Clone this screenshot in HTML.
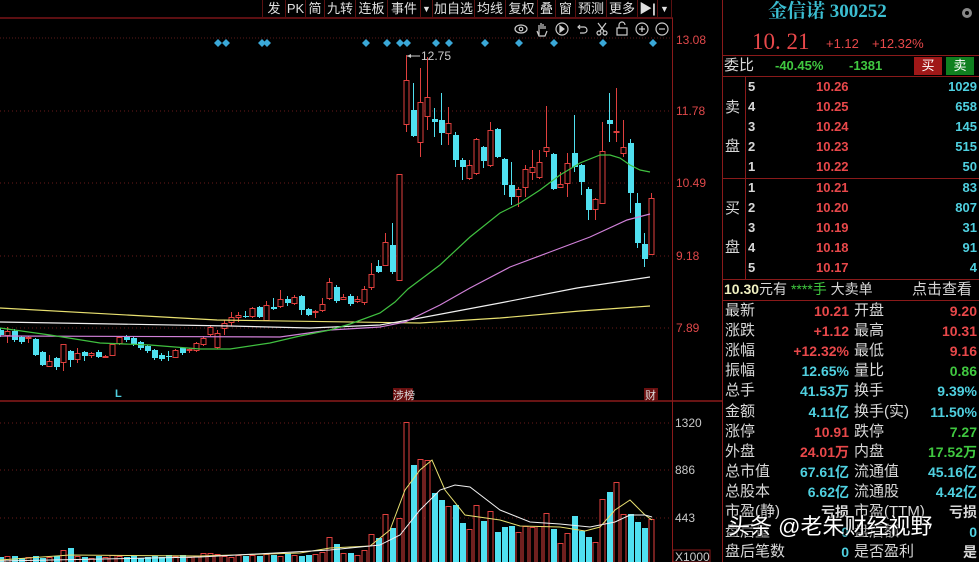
<!DOCTYPE html>
<html><head><meta charset="utf-8">
<style>
*{margin:0;padding:0;box-sizing:border-box}
body{width:979px;height:562px;background:#000;overflow:hidden;position:relative;font-family:"Liberation Sans","Noto Sans CJK SC",sans-serif;color:#d0d0d0}
.a{position:absolute;white-space:nowrap;line-height:1}
.tb{position:absolute;top:0;height:18px;font-size:13px;color:#e0e0e0;line-height:18px;text-align:center;border-right:1px solid #5a1010}
.r{color:#e8484a}.c{color:#4fd0e0}.g{color:#40c840}.w{color:#d8d8d8}
.ra{text-align:right}
</style></head><body>
<svg id="sv" width="979" height="562" style="position:absolute;left:0;top:0">
<line x1="0" y1="18" x2="673" y2="18" stroke="#7a1418" stroke-width="1.5"/>
<line x1="0" y1="38" x2="672" y2="38" stroke="#5a1a1a" stroke-dasharray="1,2"/>
<line x1="0" y1="111" x2="672" y2="111" stroke="#6a1a1a" stroke-dasharray="1,3"/>
<line x1="0" y1="183" x2="672" y2="183" stroke="#6a1a1a" stroke-dasharray="1,3"/>
<line x1="0" y1="256" x2="672" y2="256" stroke="#6a1a1a" stroke-dasharray="1,3"/>
<line x1="0" y1="328" x2="672" y2="328" stroke="#6a1a1a" stroke-dasharray="1,3"/>
<line x1="0" y1="423" x2="672" y2="423" stroke="#6a1a1a" stroke-dasharray="1,3"/>
<line x1="0" y1="470" x2="672" y2="470" stroke="#6a1a1a" stroke-dasharray="1,3"/>
<line x1="0" y1="518" x2="672" y2="518" stroke="#6a1a1a" stroke-dasharray="1,3"/>
<line x1="0" y1="401" x2="722" y2="401" stroke="#8a1a1a" stroke-width="1.5"/>
<line x1="672.5" y1="18" x2="672.5" y2="562" stroke="#8a1a1a"/>
<line x1="722.5" y1="0" x2="722.5" y2="562" stroke="#8a1a1a"/>
<g id="g"></g>
<polyline fill="none" stroke="#e8e070" stroke-width="1.2" points="0,308 217,320 420,323 500,318 580,311 650,306"/>
<polyline fill="none" stroke="#f0f0f0" stroke-width="1.2" points="0,322 230,326 310,328 380,325 420,318 500,303 577,288 650,277"/>
<polyline fill="none" stroke="#d080d8" stroke-width="1.2" points="0,336 280,337 330,330 380,327 405,322 440,305 470,288 510,267 550,252 590,237 627,220 650,214"/>
<polyline fill="none" stroke="#40c040" stroke-width="1.2" points="0,328 50,335 100,343 150,345 200,349 230,349 270,343 300,336 330,330 350,324 380,313 395,302 408,289 440,265 470,237 500,213 520,203 540,190 560,175 580,163 600,155 610,155 620,158 630,165 640,170 650,172"/>
<polyline fill="none" stroke="#e8e070" stroke-width="1" points="0,560 70,555 200,556 300,553 330,548 370,546 390,530 405,490 420,470 432,460 445,490 465,515 500,520 520,526 560,527 585,531 600,527 615,510 630,500 645,515 652,520"/>
<polyline fill="none" stroke="#f0f0f0" stroke-width="1" points="0,561 200,557 330,550 380,545 400,535 420,510 440,490 455,485 470,487 500,510 530,522 560,524 590,527 615,522 630,515 645,515 652,517"/>
<line x1="407" y1="56" x2="420" y2="56" stroke="#ccc"/><path d="M407 56l4-2v4z" fill="#ccc"/>
<text x="421" y="60" font-size="12" fill="#ccc" font-family="Liberation Sans">12.75</text>
<g stroke="#ccc" fill="none" stroke-width="1.2">
<ellipse cx="521" cy="29" rx="6" ry="4"/><circle cx="521" cy="29" r="1.8"/>
<path d="M539 35v-6v-4m2 4v-6m2 6v-5m2 5v-3m-8 5l2 5h6l2-5"/>
<circle cx="562" cy="29" r="6"/><path d="M560 26l4 3l-4 3z" fill="#ccc"/>
<path d="M578 27h6a3 3 0 010 6h-4M580 25l-2 2 2 2"/>
<circle cx="599" cy="33" r="2"/><circle cx="605" cy="33" r="2"/><path d="M600 31l6-8M604 31l-6-8"/>
<rect x="617" y="28" width="10" height="7"/><path d="M619 28v-3a3 3 0 016 0"/>
<circle cx="642" cy="29" r="6"/><path d="M639 29h6M642 26v6"/>
<circle cx="662" cy="29" r="6"/><path d="M659 29h6"/>
</g>
<g font-family="Liberation Sans" font-size="12" fill="#e0484a">
<text x="676" y="44">13.08</text><text x="676" y="115">11.78</text><text x="676" y="187">10.49</text><text x="676" y="260">9.18</text><text x="676" y="332">7.89</text>
</g>
<g font-family="Liberation Sans" font-size="12" fill="#c8c8c8">
<text x="675" y="427">1320</text><text x="675" y="474">886</text><text x="675" y="522">443</text>
</g>
<rect x="673" y="550" width="37" height="12" fill="none" stroke="#8a1a1a"/>
<text x="675" y="561" font-size="12" fill="#c8c8c8" font-family="Liberation Sans">X1000</text>
<text x="115" y="397" font-size="11" fill="#4fd0e0" font-weight="bold" font-family="Liberation Sans">L</text>
<rect x="393" y="388" width="20" height="12" fill="#6a1010"/>
<text x="393" y="399" font-size="11" fill="#ddd" font-family="Liberation Sans,Noto Sans CJK SC">涉榜</text>
<rect x="644" y="388" width="14" height="12" fill="#6a1010"/>
<text x="645" y="399" font-size="11" fill="#ddd" font-family="Noto Sans CJK SC">财</text>
<g stroke="#8a1a1a">
<line x1="722" y1="55.5" x2="979" y2="55.5"/><line x1="722" y1="76.5" x2="979" y2="76.5"/>
<line x1="722" y1="178.5" x2="979" y2="178.5"/><line x1="722" y1="279.5" x2="979" y2="279.5"/>
<line x1="722" y1="300.5" x2="979" y2="300.5"/><line x1="745.5" y1="76" x2="745.5" y2="279"/>
</g>
<g fill="#888"><circle cx="967" cy="13" r="5"/><circle cx="967" cy="13" r="2" fill="#000"/></g>
</svg>

<div class="tb" style="left:262px;width:24px;border-left:1px solid #5a1010">发</div>
<div class="tb" style="left:286px;width:20px">PK</div>
<div class="tb" style="left:306px;width:19px">简</div>
<div class="tb" style="left:325px;width:31px">九转</div>
<div class="tb" style="left:356px;width:32px">连板</div>
<div class="tb" style="left:388px;width:33px">事件</div>
<div class="tb" style="left:421px;width:12px;font-size:9px">▼</div>
<div class="tb" style="left:433px;width:42px">加自选</div>
<div class="tb" style="left:475px;width:31px">均线</div>
<div class="tb" style="left:506px;width:32px">复权</div>
<div class="tb" style="left:538px;width:18px">叠</div>
<div class="tb" style="left:556px;width:20px">窗</div>
<div class="tb" style="left:576px;width:31px">预测</div>
<div class="tb" style="left:607px;width:31px">更多</div>
<div class="tb" style="left:638px;width:20px;font-weight:bold">▶|</div>
<div class="tb" style="left:658px;width:14px;font-size:9px">▼</div>

<div class="a" style="left:768px;top:2px;font-size:19px;font-weight:bold;color:#3bbdd0;font-family:'Liberation Serif','Noto Serif CJK SC',serif">金信诺 300252</div>
<div class="a r" style="left:752px;top:30px;font-size:23px;font-family:'Liberation Serif',serif">10. 21</div>
<div class="a r" style="left:826px;top:37px;font-size:13px">+1.12</div>
<div class="a r" style="left:872px;top:37px;font-size:13px">+12.32%</div>
<div class="a w" style="left:724px;top:58px;font-size:15px">委比</div>
<div class="a g" style="left:775px;top:59px;font-size:13px;font-weight:bold">-40.45%</div>
<div class="a g" style="left:849px;top:59px;font-size:13px;font-weight:bold">-1381</div>
<div class="a" style="left:914px;top:57px;width:28px;height:18px;background:#a01818;color:#fff;font-size:13px;text-align:center;line-height:18px">买</div>
<div class="a" style="left:946px;top:57px;width:28px;height:18px;background:#108020;color:#fff;font-size:13px;text-align:center;line-height:18px">卖</div>
<div id="ob"></div>
<div class="a w" style="left:725px;top:100px;font-size:15px">卖</div>
<div class="a w" style="left:725px;top:139px;font-size:15px">盘</div>
<div class="a w" style="left:725px;top:201px;font-size:15px">买</div>
<div class="a w" style="left:725px;top:240px;font-size:15px">盘</div>
<div class="a" style="left:724px;top:282px;font-size:14px"><b style="color:#f0f0c0">10.30</b><span class="w">元有</span> <span class="g">****手</span> <span class="w">大卖单</span></div>
<div class="a w" style="left:912px;top:282px;font-size:15px">点击查看</div>
<div id="st"></div>
<div class="a" style="left:728px;top:516px;font-size:22px;color:#fff;text-shadow:1px 1px 2px #000,0 0 3px #000">头条 @老朱财经视野</div>

<script>
var d=[["c",330,335,328,337],["r",331,335,327,343],["c",331,340,329,342],["c",337,342,336,344],["r",337,338,336,343],["c",339,355,338,356],["c",352,365,351,366],["r",361,366,355,367],["c",358,367,357,370],["r",344,362,344,371],["c",351,360,350,367],["r",353,359,348,363],["c",352,356,351,361],["r",353,355,352,358],["c",352,357,350,358],["r",356,357,355,357],["r",344,355,343,356],["r",337,343,336,345],["c",336,340,335,342],["c",338,344,337,346],["c",342,348,341,350],["c",346,351,345,353],["c",350,358,349,360],["c",355,359,353,361],["c",356,357,351,361],["r",350,357,349,358],["c",348,353,347,355],["r",349,350,348,353],["r",343,350,342,352],["r",338,344,336,346],["r",327,334,325,336],["r",333,347,330,349],["r",323,328,320,335],["r",317,322,312,326],["r",315,317,312,322],["c",316,317,311,318],["r",308,316,307,318],["c",307,317,306,318],["r",305,320,301,321],["c",307,309,298,310],["r",299,306,290,308],["c",299,303,296,306],["r",297,303,295,305],["c",296,310,295,315],["c",309,315,308,316],["r",311,312,310,318],["r",304,310,298,312],["r",282,298,278,300],["c",287,301,285,303],["r",297,299,294,300],["c",296,304,294,306],["r",299,301,296,303],["r",289,302,286,305],["r",274,287,263,290],["c",266,272,260,273],["r",242,265,233,266],["c",245,272,223,274],["r",174,280,174,281],["r",80,124,55,132],["c",110,136,83,137],["r",102,142,68,157],["r",97,116,57,130],["c",119,122,108,137],["c",120,133,93,145],["r",123,133,107,145],["c",135,160,132,167],["c",160,167,158,180],["r",165,178,160,180],["r",139,173,138,175],["c",147,161,146,168],["r",130,165,122,167],["c",129,157,128,158],["c",159,185,158,195],["c",185,197,162,205],["r",189,196,187,207],["r",169,187,165,197],["r",167,172,150,180],["r",162,177,150,179],["r",147,151,106,157],["c",154,189,153,190],["r",184,187,172,188],["r",163,183,153,197],["c",153,167,115,172],["c",165,182,164,195],["c",189,210,187,220],["r",199,209,198,220],["r",151,203,122,204],["c",120,124,93,142],["r",131,132,88,142],["r",147,153,120,157],["c",143,193,139,213],["c",203,243,193,248],["c",244,259,233,267],["r",198,254,193,255]];
var v=[557,556,556,558,557,556,558,557,556,550,548,556,557,558,556,557,555,556,557,556,558,557,556,557,555,556,555,557,556,553,553,554,556,557,555,556,555,556,554,555,556,553,555,556,555,554,552,537,544,553,553,555,550,534,538,514,528,518,422,465,459,460,493,500,506,505,523,529,505,521,511,532,527,526,532,526,527,526,513,529,543,533,516,531,537,542,499,492,482,514,514,522,528,519];
var s="",R="#e0403e",C="#50e0f0";
d.forEach(function(e,i){var x=7*i;var col=e[0]=="r"?R:C;var h=Math.max(1,e[2]-e[1]);
s+='<line x1="'+(x+.5)+'" y1="'+e[3]+'" x2="'+(x+.5)+'" y2="'+e[4]+'" stroke="'+col+'"/>';
if(e[0]=="r")s+='<rect x="'+(x-2)+'" y="'+e[1]+'.5" width="5" height="'+h+'" fill="#000" stroke="'+col+'"/>';
else s+='<rect x="'+(x-2)+'" y="'+e[1]+'" width="6" height="'+h+'" fill="'+col+'"/>';
var t=v[i];
if(e[0]=="r")s+='<rect x="'+(x-2)+'" y="'+t+'.5" width="5" height="'+(565-t)+'" fill="#000" stroke="'+R+'"/>';
else s+='<rect x="'+(x-2)+'" y="'+t+'" width="6" height="'+(565-t)+'" fill="'+C+'"/>';});
var dm=[218,226,262,267,366,387,400,407,436,449,485,519,554,603,653];
dm.forEach(function(x){s+='<path d="M'+x+' 39l4 4-4 4-4-4z" fill="#3aa8d8"/>';});
document.getElementById("g").innerHTML=s;
var ob="",sp=[["5","10.26","1029"],["4","10.25","658"],["3","10.24","145"],["2","10.23","515"],["1","10.22","50"],["1","10.21","83"],["2","10.20","807"],["3","10.19","31"],["4","10.18","91"],["5","10.17","4"]];
sp.forEach(function(r,k){var y=(k<5?80+20*k:181+20*(k-5));
ob+='<div class="a w" style="left:748px;top:'+y+'px;font-size:13px;font-weight:bold">'+r[0]+'</div><div class="a r" style="left:816px;top:'+y+'px;font-size:13px;font-weight:bold">'+r[1]+'</div><div class="a c ra" style="right:2px;top:'+y+'px;font-size:13px;font-weight:bold">'+r[2]+'</div>';});
document.getElementById("ob").innerHTML=ob;
var st=[["最新","10.21","r","开盘","9.20","r"],["涨跌","+1.12","r","最高","10.31","r"],["涨幅","+12.32%","r","最低","9.16","r"],["振幅","12.65%","c","量比","0.86","g"],["总手","41.53万","c","换手","9.39%","c"],["金额","4.11亿","c","换手(实)","11.50%","c"],["涨停","10.91","r","跌停","7.27","g"],["外盘","24.01万","r","内盘","17.52万","g"],["总市值","67.61亿","c","流通值","45.16亿","c"],["总股本","6.62亿","c","流通股","4.42亿","c"],["市盈(静)","亏损","w","市盈(TTM)","亏损","w"],["盘后量","0","c","盘后额","0","c"],["盘后笔数","0","c","是否盈利","是","w"]];
var h="";st.forEach(function(r,k){var y=303+20.1*k;
h+='<div class="a w" style="left:725px;top:'+y+'px;font-size:15px">'+r[0]+'</div><div class="a '+r[2]+'" style="right:130px;top:'+(y+1)+'px;font-size:14px;font-weight:bold">'+r[1]+'</div><div class="a w" style="left:854px;top:'+y+'px;font-size:15px">'+r[3]+'</div><div class="a '+r[5]+'" style="right:2px;top:'+(y+1)+'px;font-size:14px;font-weight:bold">'+r[4]+'</div>';});
document.getElementById("st").innerHTML=h;
</script>
</body></html>
